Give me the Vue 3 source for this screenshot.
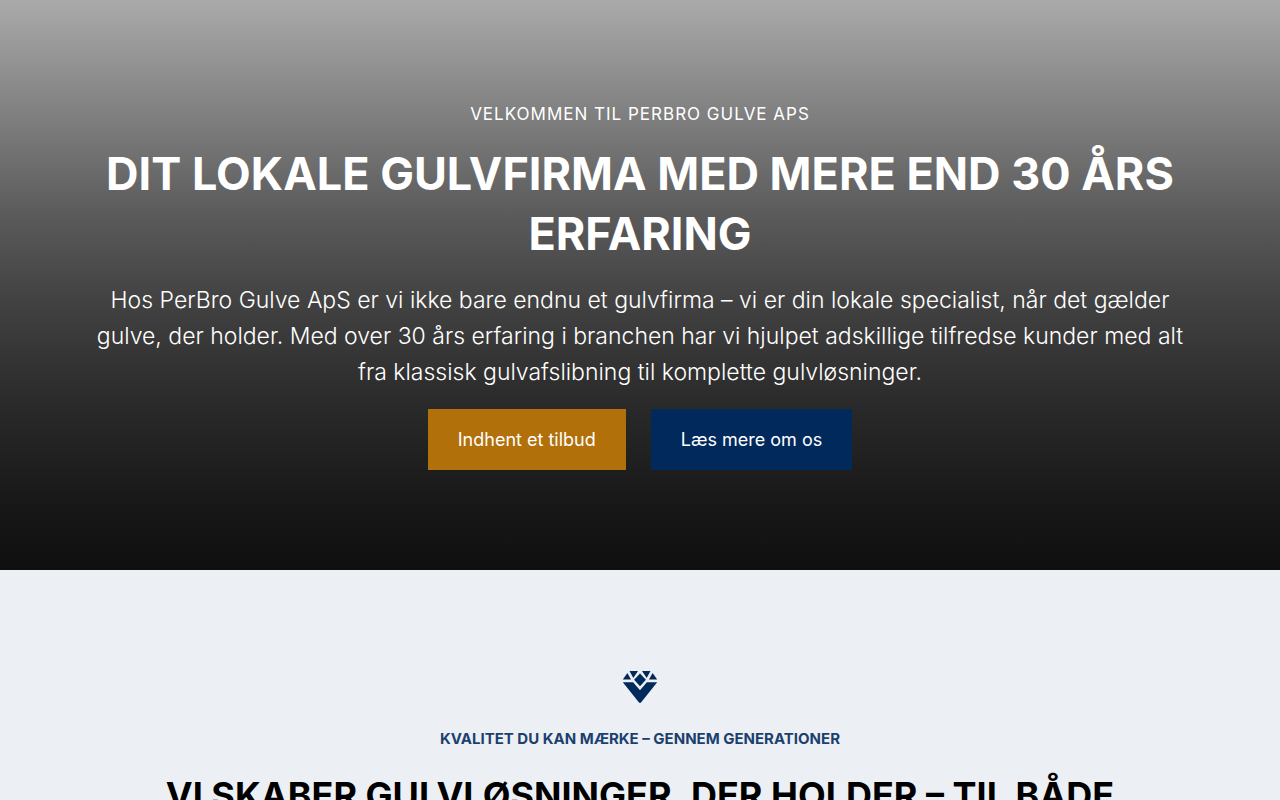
<script setup>
const actions = [
  { label: 'Indhent et tilbud', href: '#tilbud', tone: 'gold' },
  { label: 'Læs mere om os', href: '#om-os', tone: 'navy' },
]
</script>

<template>
  <main class="page">
    <section class="hero">
      <p class="hero-eyebrow">VELKOMMEN TIL PERBRO GULVE APS</p>
      <h1 class="hero-title">DIT LOKALE GULVFIRMA MED MERE END 30 ÅRS ERFARING</h1>
      <p class="hero-text">
        Hos PerBro Gulve ApS er vi ikke bare endnu et gulvfirma – vi er din lokale specialist, når det gælder
        gulve, der holder. Med over 30 års erfaring i branchen har vi hjulpet adskillige tilfredse kunder med alt
        fra klassisk gulvafslibning til komplette gulvløsninger.
      </p>
      <div class="actions">
        <a v-for="a in actions" :key="a.href" :href="a.href" class="action" :class="a.tone">{{ a.label }}</a>
      </div>
    </section>

    <section class="quality">
      <svg class="gem" viewBox="0 0 36 34" aria-hidden="true">
        <path d="M5.4 3 9 9.500H.8zM7.500 1H16l-4.700 7zM20 1h8.500l-3.800 7zM30.600 3l4.600 6.500H27zM18 3.400l5.900 6.400L18 16.300l-5.900-6.500zM.8 12.300h10.300L18 20.300l6.900-8h10.300L19.200 32.300q-1.200 1.300-2.400 0z" />
      </svg>
      <p class="quality-eyebrow">KVALITET DU KAN MÆRKE – GENNEM GENERATIONER</p>
      <h2 class="quality-title">VI SKABER GULVLØSNINGER, DER HOLDER – TIL BÅDE</h2>
    </section>
  </main>
</template>

<style>
body {
  margin: 0;
  background: #ecf0f5;
}
</style>

<style scoped>
.page {
  font-family: Inter, "Open Sans", sans-serif;
  text-align: center;
}

.hero {
  padding: 100px 80px;
  color: #fff;
  background: linear-gradient(#aaa 0%, #848484 18%, #5a5a5a 38%, #434343 52%, #2b2b2b 70%, #191919 87%, #0f0f0f 100%);
}

.hero-eyebrow {
  margin: 0 0 16px;
  font-size: 17px;
  line-height: 28px;
  letter-spacing: 1px;
}

.hero-title {
  margin: 0;
  font-size: 45px;
  font-weight: 700;
  line-height: 60px;
}

.hero-text {
  margin: 18px 0;
  font-size: 23px;
  font-weight: 300;
  line-height: 36px;
}

.actions {
  display: flex;
  justify-content: center;
  gap: 25px;
  padding-top: 1px;
}

.action {
  padding: 18px 30px;
  color: #fff;
  font-size: 18px;
  line-height: 25px;
  text-decoration: none;
}

.gold {
  background: #b1700a;
}

.navy {
  background: #02295b;
}

.quality {
  padding: 100px 80px;
  background: #ecf0f5;
}

.gem {
  display: block;
  width: 36px;
  height: 34px;
  margin: 0 auto 24px;
  fill: #02295b;
}

.quality-eyebrow {
  margin: 0 0 20px;
  color: #1c406e;
  font-size: 15px;
  font-weight: 700;
  line-height: 22px;
}

.quality-title {
  margin: 0;
  color: #000;
  font-size: 36px;
  font-weight: 700;
  line-height: 50px;
}
</style>
